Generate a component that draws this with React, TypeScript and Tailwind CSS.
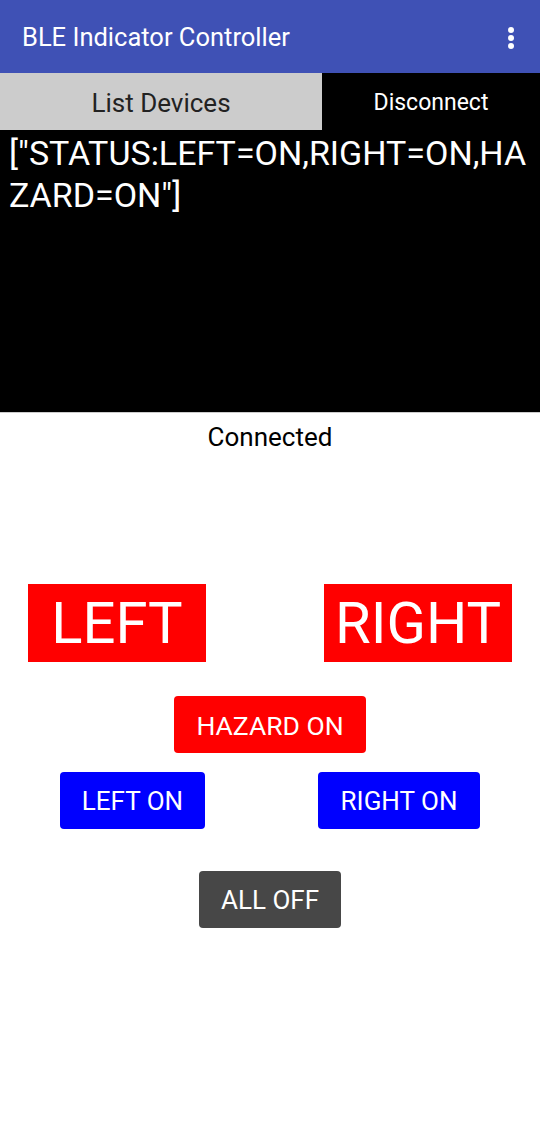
import React from "react";

export default function App() {
  const font = { fontFamily: "Roboto, 'Noto Sans', sans-serif" };
  return (
    <div className="w-[540px] h-[1137px] bg-white flex flex-col" style={font}>
      <div className="h-[73px] bg-[#3f51b5] flex items-center justify-between pl-[22px] pr-[24px] pt-[2px]">
        <span className="text-white text-[25.5px]">BLE Indicator Controller</span>
        <svg width="10" height="24" viewBox="0 0 10 24">
          <circle cx="5" cy="4" r="3" fill="white" />
          <circle cx="5" cy="12" r="3" fill="white" />
          <circle cx="5" cy="20" r="3" fill="white" />
        </svg>
      </div>
      <div className="flex h-[57px]">
        <div className="w-[322px] bg-[#cccccc] flex items-center justify-center pt-[3px] text-[26px] text-[#222]">List Devices</div>
        <div className="flex-1 bg-black flex items-center justify-center pt-[3px] text-[23px] text-white">Disconnect</div>
      </div>
      <div className="h-[283px] bg-black border-b border-[#ccc] px-[9px] pt-[2px] text-white text-[34px] leading-[42px] break-all">
        ["STATUS:LEFT=ON,RIGHT=ON,HAZARD=ON"]
      </div>
      <div className="h-[48px] flex items-center justify-center text-[26px] text-black">Connected</div>
      <div className="h-[123px]" />
      <div className="flex justify-between px-[28px]">
        <div className="w-[178px] h-[78px] bg-[#ff0000] flex items-center justify-center text-white text-[58px]">LEFT</div>
        <div className="w-[188px] h-[78px] bg-[#ff0000] flex items-center justify-center text-white text-[58px]">RIGHT</div>
      </div>
      <div className="flex justify-center mt-[34px]">
        <div className="w-[192px] h-[57px] rounded-[4px] bg-[#ff0000] flex items-center justify-center pt-[2px] text-white text-[26.5px]">HAZARD ON</div>
      </div>
      <div className="flex justify-between pl-[60px] pr-[60px] mt-[19px]">
        <div className="w-[145px] h-[57px] rounded-[4px] bg-[#0000ff] flex items-center justify-center pt-[2px] text-white text-[26px]">LEFT ON</div>
        <div className="w-[162px] h-[57px] rounded-[4px] bg-[#0000ff] flex items-center justify-center pt-[2px] text-white text-[26px]">RIGHT ON</div>
      </div>
      <div className="flex justify-center mt-[42px]">
        <div className="w-[142px] h-[57px] rounded-[4px] bg-[#474747] flex items-center justify-center pt-[2px] text-white text-[26px]">ALL OFF</div>
      </div>
    </div>
  );
}
